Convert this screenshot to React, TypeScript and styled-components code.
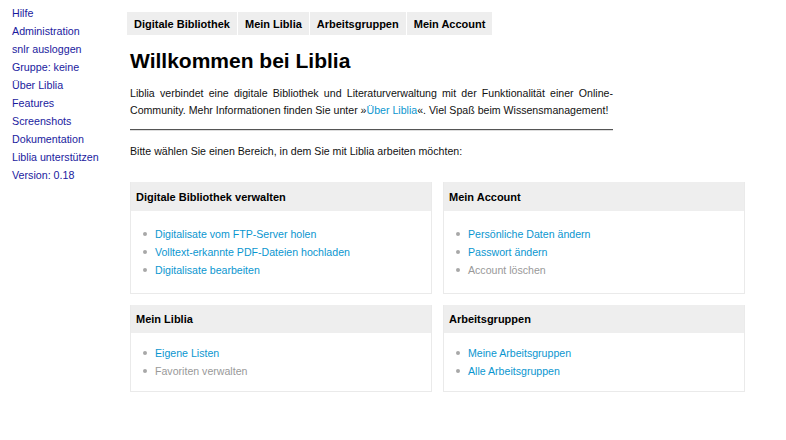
import React from "react";
import styled, { createGlobalStyle } from "styled-components";

const Global = createGlobalStyle`
  html, body { margin: 0; padding: 0; background: #fff; }
  body { font-family: "Liberation Sans", Arial, sans-serif; font-size: 10.6px; color: #111; }
  a { text-decoration: none; }
`;

const Page = styled.div`
  display: grid;
  grid-template-columns: 127px 1fr;
  width: 786px;
`;

const Sidebar = styled.nav`
  display: flex;
  flex-direction: column;
  padding: 4px 0 0 12px;
`;

const SideLink = styled.a`
  color: #1a1a9e;
  font-size: 10.7px;
  line-height: 18px;
`;

const Main = styled.main`
  padding-top: 12px;
  display: flex;
  flex-direction: column;
`;

const Tabs = styled.div`
  display: flex;
  gap: 1px;
`;

const Tab = styled.a`
  display: flex;
  align-items: center;
  height: 23px;
  padding: 0 7px;
  background: #eeeeee;
  color: #000;
  font-weight: bold;
  font-size: 11px;
`;

const Content = styled.div`
  padding-left: 3px;
  display: flex;
  flex-direction: column;
`;

const Title = styled.h1`
  margin: 13px 0 0 0;
  font-size: 21px;
  line-height: 26px;
  font-weight: bold;
  color: #000;
`;

const Intro = styled.p`
  margin: 11px 0 0 0;
  width: 483px;
  text-align: justify;
  line-height: 17px;
  color: #111;
`;

const InlineLink = styled.a`
  color: #0a96cf;
`;

const Rule = styled.hr`
  margin: 10px 0 0 0;
  width: 483px;
  border: 0;
  border-top: 1px solid #555;
  border-bottom: 1px solid #ddd;
  height: 0;
`;

const Prompt = styled.p`
  margin: 12px 0 0 0;
  line-height: 17px;
`;

const Grid = styled.div`
  margin-top: 22px;
  display: grid;
  grid-template-columns: 302px 302px;
  column-gap: 11px;
  row-gap: 11px;
`;

const Box = styled.section`
  border: 1px solid #eaeaea;
  border-top: 0;
  display: flex;
  flex-direction: column;
`;

const BoxHead = styled.h2<{ $h: number }>`
  margin: 0;
  height: ${(p) => p.$h}px;
  display: flex;
  align-items: center;
  padding-left: 5px;
  background: #eeeeee;
  font-size: 11px;
  font-weight: bold;
  color: #000;
`;

const List = styled.ul<{ $pad: number }>`
  margin: 0;
  padding: ${(p) => p.$pad}px 0 ${(p) => p.$pad}px 24px;
  list-style: none;
`;

const Item = styled.li`
  position: relative;
  line-height: 18px;
  &::before {
    content: "";
    position: absolute;
    left: -12px;
    top: 7px;
    width: 4px;
    height: 4px;
    border-radius: 50%;
    background: #a8a8a8;
  }
`;

const ItemLink = styled.a<{ $off?: boolean }>`
  color: ${(p) => (p.$off ? "#999999" : "#0a96cf")};
`;

type Entry = { label: string; off?: boolean };
type BoxData = { title: string; items: Entry[]; h: number; pad: number };

const boxes: BoxData[] = [
  {
    title: "Digitale Bibliothek verwalten",
    h: 29,
    pad: 14,
    items: [
      { label: "Digitalisate vom FTP-Server holen" },
      { label: "Volltext-erkannte PDF-Dateien hochladen" },
      { label: "Digitalisate bearbeiten" },
    ],
  },
  {
    title: "Mein Account",
    h: 29,
    pad: 14,
    items: [
      { label: "Persönliche Daten ändern" },
      { label: "Passwort ändern" },
      { label: "Account löschen", off: true },
    ],
  },
  {
    title: "Mein Liblia",
    h: 28,
    pad: 11,
    items: [{ label: "Eigene Listen" }, { label: "Favoriten verwalten", off: true }],
  },
  {
    title: "Arbeitsgruppen",
    h: 28,
    pad: 11,
    items: [{ label: "Meine Arbeitsgruppen" }, { label: "Alle Arbeitsgruppen" }],
  },
];

const sideLinks = [
  "Hilfe",
  "Administration",
  "snlr ausloggen",
  "Gruppe: keine",
  "Über Liblia",
  "Features",
  "Screenshots",
  "Dokumentation",
  "Liblia unterstützen",
  "Version: 0.18",
];

export default function App() {
  return (
    <>
      <Global />
      <Page>
        <Sidebar>
          {sideLinks.map((l) => (
            <SideLink key={l}>{l}</SideLink>
          ))}
        </Sidebar>
        <Main>
          <Tabs>
            <Tab>Digitale Bibliothek</Tab>
            <Tab>Mein Liblia</Tab>
            <Tab>Arbeitsgruppen</Tab>
            <Tab>Mein Account</Tab>
          </Tabs>
          <Content>
            <Title>Willkommen bei Liblia</Title>
            <Intro>
              Liblia verbindet eine digitale Bibliothek und Literaturverwaltung mit der Funktionalität einer
              Online-Community. Mehr Informationen finden Sie unter »<InlineLink>Über Liblia</InlineLink>«. Viel
              Spaß beim Wissensmanagement!
            </Intro>
            <Rule />
            <Prompt>Bitte wählen Sie einen Bereich, in dem Sie mit Liblia arbeiten möchten:</Prompt>
            <Grid>
              {boxes.map((b) => (
                <Box key={b.title}>
                  <BoxHead $h={b.h}>{b.title}</BoxHead>
                  <List $pad={b.pad}>
                    {b.items.map((it) => (
                      <Item key={it.label}>
                        <ItemLink $off={it.off}>{it.label}</ItemLink>
                      </Item>
                    ))}
                  </List>
                </Box>
              ))}
            </Grid>
          </Content>
        </Main>
      </Page>
    </>
  );
}
